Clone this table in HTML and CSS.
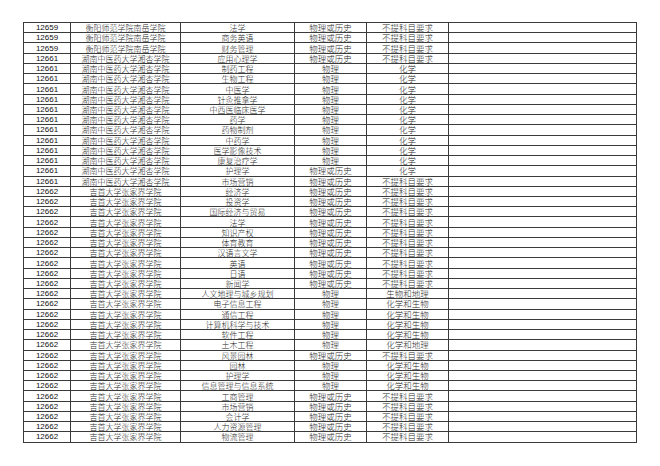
FILE: index.html
```html
<!DOCTYPE html>
<html lang="zh">
<head>
<meta charset="utf-8">
<link rel="stylesheet" href="styles.css">
</head>
<body>
<table class="sheet">
<tbody>
<tr><td class="num">12659</td><td>衡阳师范学院南岳学院</td><td>法学</td><td class="w">物理或历史</td><td class="w">不提科目要求</td><td></td></tr>
<tr><td class="num">12659</td><td>衡阳师范学院南岳学院</td><td>商务英语</td><td class="w">物理或历史</td><td class="w">不提科目要求</td><td></td></tr>
<tr><td class="num">12659</td><td>衡阳师范学院南岳学院</td><td>财务管理</td><td class="w">物理或历史</td><td class="w">不提科目要求</td><td></td></tr>
<tr><td class="num">12661</td><td>湖南中医药大学湘杏学院</td><td>应用心理学</td><td class="w">物理或历史</td><td class="w">不提科目要求</td><td></td></tr>
<tr><td class="num">12661</td><td>湖南中医药大学湘杏学院</td><td>制药工程</td><td class="w">物理</td><td class="w">化学</td><td></td></tr>
<tr><td class="num">12661</td><td>湖南中医药大学湘杏学院</td><td>生物工程</td><td class="w">物理</td><td class="w">化学</td><td></td></tr>
<tr><td class="num">12661</td><td>湖南中医药大学湘杏学院</td><td>中医学</td><td class="w">物理</td><td class="w">化学</td><td></td></tr>
<tr><td class="num">12661</td><td>湖南中医药大学湘杏学院</td><td>针灸推拿学</td><td class="w">物理</td><td class="w">化学</td><td></td></tr>
<tr><td class="num">12661</td><td>湖南中医药大学湘杏学院</td><td>中西医临床医学</td><td class="w">物理</td><td class="w">化学</td><td></td></tr>
<tr><td class="num">12661</td><td>湖南中医药大学湘杏学院</td><td>药学</td><td class="w">物理</td><td class="w">化学</td><td></td></tr>
<tr><td class="num">12661</td><td>湖南中医药大学湘杏学院</td><td>药物制剂</td><td class="w">物理</td><td class="w">化学</td><td></td></tr>
<tr><td class="num">12661</td><td>湖南中医药大学湘杏学院</td><td>中药学</td><td class="w">物理</td><td class="w">化学</td><td></td></tr>
<tr><td class="num">12661</td><td>湖南中医药大学湘杏学院</td><td>医学影像技术</td><td class="w">物理</td><td class="w">化学</td><td></td></tr>
<tr><td class="num">12661</td><td>湖南中医药大学湘杏学院</td><td>康复治疗学</td><td class="w">物理</td><td class="w">化学</td><td></td></tr>
<tr><td class="num">12661</td><td>湖南中医药大学湘杏学院</td><td>护理学</td><td class="w">物理或历史</td><td class="w">化学</td><td></td></tr>
<tr><td class="num">12661</td><td>湖南中医药大学湘杏学院</td><td>市场营销</td><td class="w">物理或历史</td><td class="w">不提科目要求</td><td></td></tr>
<tr><td class="num">12662</td><td>吉首大学张家界学院</td><td>经济学</td><td class="w">物理或历史</td><td class="w">不提科目要求</td><td></td></tr>
<tr><td class="num">12662</td><td>吉首大学张家界学院</td><td>投资学</td><td class="w">物理或历史</td><td class="w">不提科目要求</td><td></td></tr>
<tr><td class="num">12662</td><td>吉首大学张家界学院</td><td>国际经济与贸易</td><td class="w">物理或历史</td><td class="w">不提科目要求</td><td></td></tr>
<tr><td class="num">12662</td><td>吉首大学张家界学院</td><td>法学</td><td class="w">物理或历史</td><td class="w">不提科目要求</td><td></td></tr>
<tr><td class="num">12662</td><td>吉首大学张家界学院</td><td>知识产权</td><td class="w">物理或历史</td><td class="w">不提科目要求</td><td></td></tr>
<tr><td class="num">12662</td><td>吉首大学张家界学院</td><td>体育教育</td><td class="w">物理或历史</td><td class="w">不提科目要求</td><td></td></tr>
<tr><td class="num">12662</td><td>吉首大学张家界学院</td><td>汉语言文学</td><td class="w">物理或历史</td><td class="w">不提科目要求</td><td></td></tr>
<tr><td class="num">12662</td><td>吉首大学张家界学院</td><td>英语</td><td class="w">物理或历史</td><td class="w">不提科目要求</td><td></td></tr>
<tr><td class="num">12662</td><td>吉首大学张家界学院</td><td>日语</td><td class="w">物理或历史</td><td class="w">不提科目要求</td><td></td></tr>
<tr><td class="num">12662</td><td>吉首大学张家界学院</td><td>新闻学</td><td class="w">物理或历史</td><td class="w">不提科目要求</td><td></td></tr>
<tr><td class="num">12662</td><td>吉首大学张家界学院</td><td>人文地理与城乡规划</td><td class="w">物理</td><td class="w">生物和地理</td><td></td></tr>
<tr><td class="num">12662</td><td>吉首大学张家界学院</td><td>电子信息工程</td><td class="w">物理</td><td class="w">化学和生物</td><td></td></tr>
<tr><td class="num">12662</td><td>吉首大学张家界学院</td><td>通信工程</td><td class="w">物理</td><td class="w">化学和生物</td><td></td></tr>
<tr><td class="num">12662</td><td>吉首大学张家界学院</td><td>计算机科学与技术</td><td class="w">物理</td><td class="w">化学和生物</td><td></td></tr>
<tr><td class="num">12662</td><td>吉首大学张家界学院</td><td>软件工程</td><td class="w">物理</td><td class="w">化学和生物</td><td></td></tr>
<tr><td class="num">12662</td><td>吉首大学张家界学院</td><td>土木工程</td><td class="w">物理</td><td class="w">化学和地理</td><td></td></tr>
<tr><td class="num">12662</td><td>吉首大学张家界学院</td><td>风景园林</td><td class="w">物理或历史</td><td class="w">不提科目要求</td><td></td></tr>
<tr><td class="num">12662</td><td>吉首大学张家界学院</td><td>园林</td><td class="w">物理</td><td class="w">化学和生物</td><td></td></tr>
<tr><td class="num">12662</td><td>吉首大学张家界学院</td><td>护理学</td><td class="w">物理</td><td class="w">化学和生物</td><td></td></tr>
<tr><td class="num">12662</td><td>吉首大学张家界学院</td><td>信息管理与信息系统</td><td class="w">物理</td><td class="w">化学和生物</td><td></td></tr>
<tr><td class="num">12662</td><td>吉首大学张家界学院</td><td>工商管理</td><td class="w">物理或历史</td><td class="w">不提科目要求</td><td></td></tr>
<tr><td class="num">12662</td><td>吉首大学张家界学院</td><td>市场营销</td><td class="w">物理或历史</td><td class="w">不提科目要求</td><td></td></tr>
<tr><td class="num">12662</td><td>吉首大学张家界学院</td><td>会计学</td><td class="w">物理或历史</td><td class="w">不提科目要求</td><td></td></tr>
<tr><td class="num">12662</td><td>吉首大学张家界学院</td><td>人力资源管理</td><td class="w">物理或历史</td><td class="w">不提科目要求</td><td></td></tr>
<tr><td class="num">12662</td><td>吉首大学张家界学院</td><td>物流管理</td><td class="w">物理或历史</td><td class="w">不提科目要求</td><td></td></tr>
</tbody>
</table>
</body>
</html>
```
FILE: styles.css
```css
html, body {
  margin: 0;
  padding: 0;
  background: #ffffff;
}
body {
  padding: 22px 0 0 23px;
}
.sheet {
  display: block;
  border-collapse: separate;
  border-spacing: 0;
  font-family: "Noto Sans CJK SC", "Liberation Serif", serif;
  color: #2a2a2a;
}
.sheet tbody {
  display: grid;
  width: max-content;
  grid-template-columns: 47px 110px 114px 72px 82px 188px;
  grid-auto-rows: 10.24px;
  border-top: 1px solid #3a3a3a;
  border-left: 1px solid #3a3a3a;
}
.sheet tr {
  display: contents;
}
.sheet td {
  display: flex;
  align-items: center;
  justify-content: center;
  box-sizing: border-box;
  border-right: 1px solid #3a3a3a;
  border-bottom: 1px solid #3a3a3a;
  padding: 0;
  font-size: 8px;
  line-height: 9px;
  white-space: nowrap;
  overflow: hidden;
  font-weight: 300;
}
.sheet td.num {
  font-family: "Liberation Sans", Arial, sans-serif;
  font-size: 8px;
  font-weight: 400;
  color: #111;
}
.sheet td.w {
  font-size: 8.5px;
}
```
